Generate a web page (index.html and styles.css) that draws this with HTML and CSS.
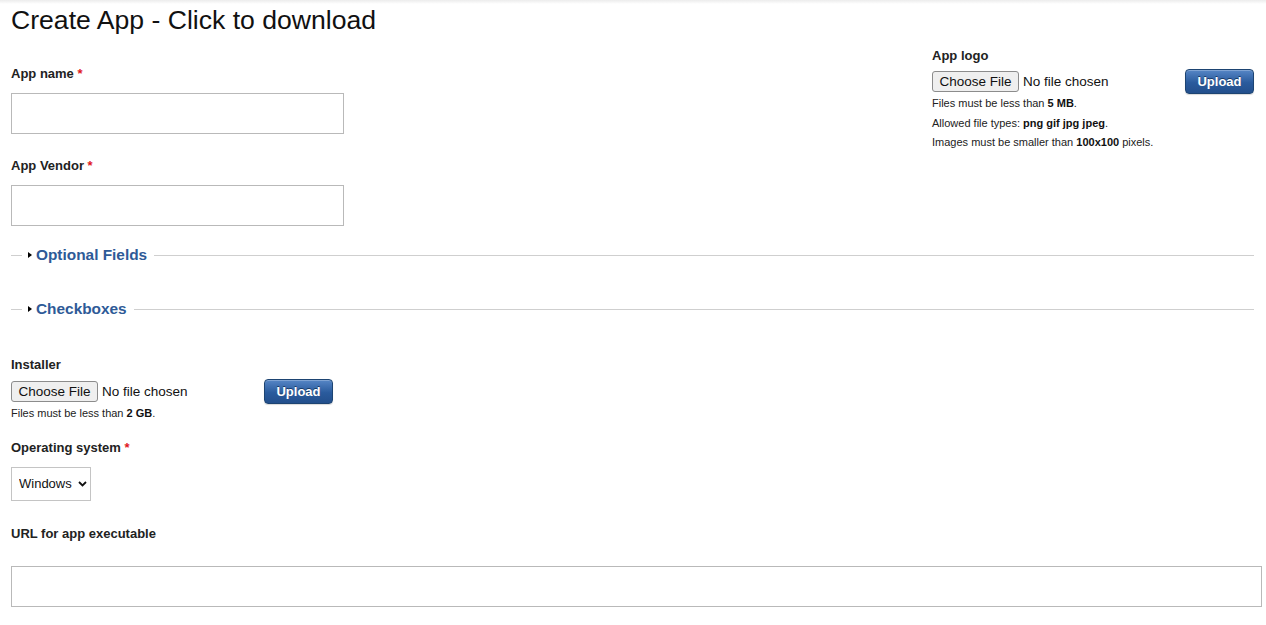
FILE: index.html
```html
<!DOCTYPE html>
<html lang="en">
<head>
<meta charset="utf-8">
<title>Create App - Click to download</title>
<link rel="stylesheet" href="styles.css">
</head>
<body>
<div class="topshade"></div>
<main class="page">
  <h1 class="title">Create App - Click to download</h1>
  <form class="form">
    <div class="top">
      <div class="col-left">
        <div class="field field-first">
          <label class="label">App name <span class="req">*</span></label>
          <input class="text-input" type="text">
        </div>
        <div class="field field-next">
          <label class="label">App Vendor <span class="req">*</span></label>
          <input class="text-input" type="text">
        </div>
      </div>
      <div class="col-right">
        <label class="label">App logo</label>
        <div class="file-row file-row-right">
          <label class="file">
            <span class="file-btn">Choose File</span>
            <span class="file-name">No file chosen</span>
          </label>
          <button type="button" class="upload">Upload</button>
        </div>
        <div class="help">Files must be less than <b>5 MB</b>.</div>
        <div class="help">Allowed file types: <b>png gif jpg jpeg</b>.</div>
        <div class="help">Images must be smaller than <b>100x100</b> pixels.</div>
      </div>
    </div>

    <div class="collapse collapse-first">
      <span class="rule-short"></span>
      <span class="tri"></span>
      <span class="legend">Optional Fields</span>
      <span class="rule"></span>
    </div>
    <div class="collapse collapse-next">
      <span class="rule-short"></span>
      <span class="tri"></span>
      <span class="legend">Checkboxes</span>
      <span class="rule"></span>
    </div>

    <div class="field installer">
      <label class="label">Installer</label>
      <div class="file-row">
        <label class="file">
          <span class="file-btn">Choose File</span>
          <span class="file-name">No file chosen</span>
        </label>
        <button type="button" class="upload">Upload</button>
      </div>
      <div class="help">Files must be less than <b>2 GB</b>.</div>
    </div>

    <div class="field os">
      <label class="label">Operating system <span class="req">*</span></label>
      <div class="select-wrap">
        <select class="select">
          <option>Windows</option>
        </select>
        <svg class="chev" width="9" height="6" viewBox="0 0 9 6"><path d="M1 1 L4.5 4.5 L8 1" fill="none" stroke="#111" stroke-width="1.8"/></svg>
      </div>
    </div>

    <div class="field url">
      <label class="label">URL for app executable</label>
      <input class="text-input text-wide" type="text">
    </div>
  </form>
</main>
</body>
</html>
```

FILE: styles.css
```css
* { box-sizing: border-box; }
html, body { margin: 0; padding: 0; background: #fff; }
body {
  font-family: "Liberation Sans", Arial, Helvetica, sans-serif;
  color: #222;
  position: relative;
}
.topshade {
  position: absolute;
  left: 0; right: 0; top: 0;
  height: 4px;
  background: linear-gradient(#ececec, rgba(255,255,255,0));
}
.page {
  padding: 0 4px 0 11px;
}
.title {
  margin: 0;
  font-size: 26.6px;
  line-height: 40px;
  font-weight: normal;
  color: #111;
}
.form { margin: 0; }
.top {
  display: flex;
  justify-content: space-between;
  align-items: flex-start;
}
.col-left { width: 333px; }
.col-right {
  width: 330px;
  margin-top: 8px;
}
.label {
  display: block;
  font-size: 13px;
  line-height: 16px;
  font-weight: bold;
  color: #222;
}
.req { color: #e0171c; }
.field-first { margin-top: 26px; }
.field-next { margin-top: 24px; }
.text-input {
  display: block;
  margin-top: 11px;
  width: 333px;
  height: 41px;
  border: 1px solid #b9b9b9;
  border-radius: 0;
  padding: 0 8px;
  font: 13px "Liberation Sans", Arial, sans-serif;
  background: #fff;
  outline: none;
}
.text-wide { width: 1251px; margin-top: 24px; }

.file-row {
  display: flex;
  align-items: center;
  height: 25px;
  margin-top: 6px;
}
.file-row-right { margin-top: 5px; }
.file {
  display: flex;
  align-items: center;
  width: 253px;
  flex-shrink: 0;
  font-size: 13px;
  color: #111;
  white-space: nowrap;
}
.file-btn {
  display: inline-block;
  flex-shrink: 0;
  height: 21px;
  line-height: 19px;
  padding: 0;
  width: 87px;
  text-align: center;
  border: 1px solid #8c8c8c;
  border-radius: 3px;
  background: #efefef;
  color: #111;
  font-size: 13.5px;
  white-space: nowrap;
}
.file-name {
  margin-left: 4px;
  font-size: 13.5px;
  white-space: nowrap;
}
.upload {
  flex-shrink: 0;
  width: 69px;
  height: 25px;
  padding: 0;
  border: 1px solid #1d4472;
  border-radius: 4px;
  background: linear-gradient(#5686c6, #2a5b9d 55%, #234f8c);
  color: #fff;
  font: bold 13px "Liberation Sans", Arial, sans-serif;
  text-shadow: 0 -1px 0 #1a3a66;
  box-shadow: inset 0 1px 0 rgba(255,255,255,0.25), 0 1px 1px rgba(0,0,0,0.15);
  cursor: pointer;
}
.help {
  font-size: 11px;
  line-height: 19.5px;
  color: #222;
}
.help b { color: #111; }

.collapse {
  display: flex;
  align-items: center;
  height: 20px;
  margin-right: 8px;
}
.collapse-first { margin-top: 19px; }
.collapse-next { margin-top: 34px; }
.rule-short {
  width: 11px;
  height: 1px;
  background: #cfcfcf;
}
.tri {
  width: 0; height: 0;
  margin-left: 6px;
  border-left: 4px solid #000;
  border-top: 3.5px solid transparent;
  border-bottom: 3.5px solid transparent;
}
.legend {
  margin-left: 4px;
  font-size: 15.4px;
  font-weight: bold;
  color: #2e5a97;
  line-height: 20px;
}
.rule {
  flex: 1;
  height: 1px;
  margin-left: 7px;
  background: #cfcfcf;
}

.installer { margin-top: 38px; }
.os { margin-top: 16px; }
.select-wrap {
  position: relative;
  margin-top: 11px;
  width: 80px;
  height: 34px;
}
.select {
  -webkit-appearance: none;
  appearance: none;
  width: 80px;
  height: 34px;
  border: 1px solid #c4c4c4;
  border-radius: 0;
  background: #fff;
  padding: 0 0 0 7px;
  font: 13px "Liberation Sans", Arial, sans-serif;
  color: #111;
}
.chev {
  position: absolute;
  right: 4px;
  top: 14px;
  pointer-events: none;
}
.url { margin-top: 25px; }
```
